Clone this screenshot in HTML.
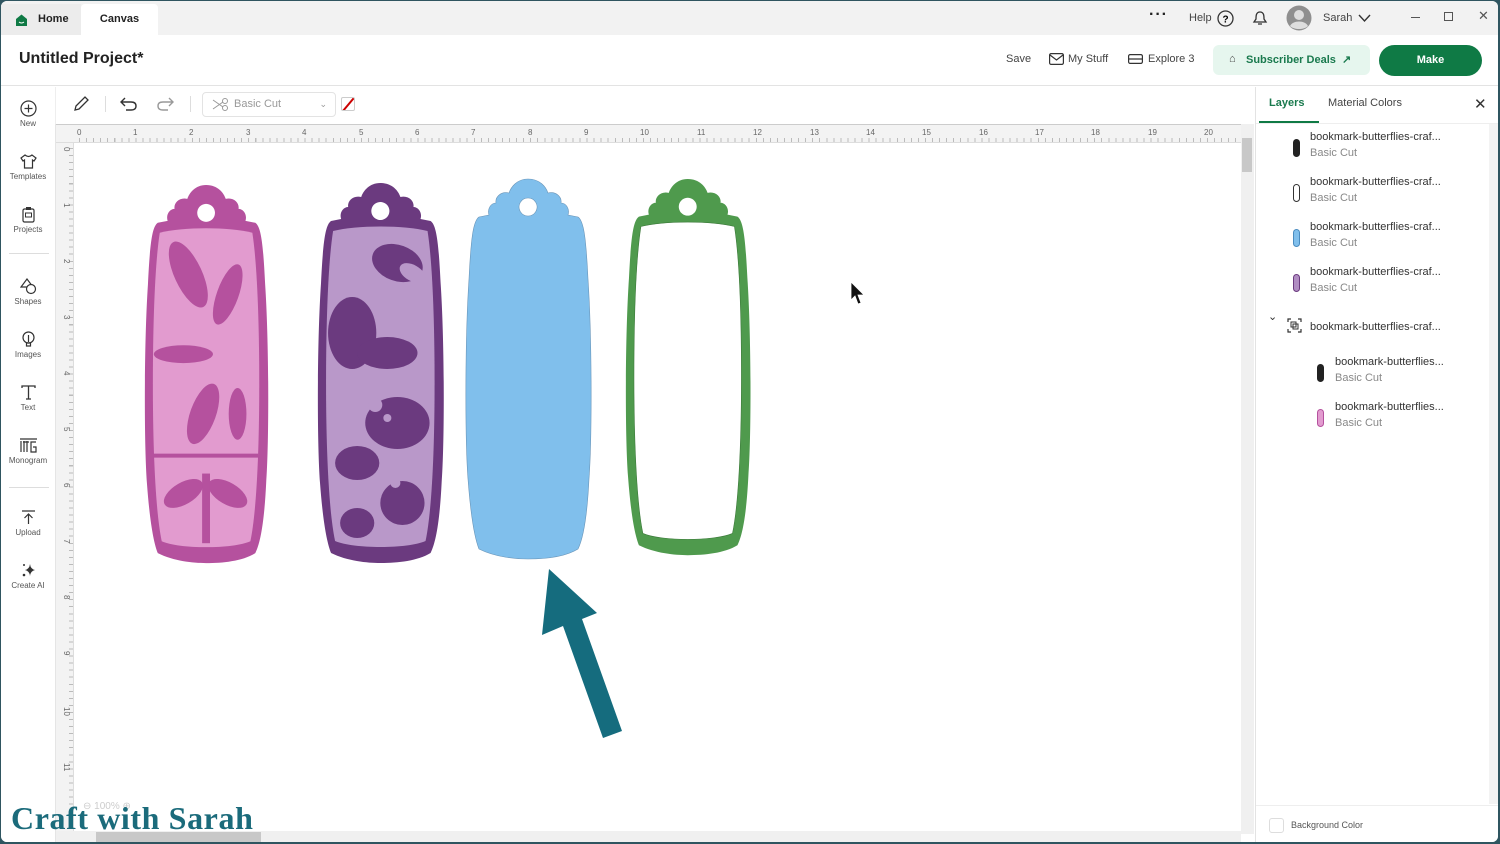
<!DOCTYPE html>
<html><head><meta charset="utf-8"><style>
*{margin:0;padding:0;box-sizing:border-box}
body{width:1500px;height:844px;overflow:hidden;background:#2f5560;font-family:"Liberation Sans",sans-serif;color:#222;position:relative}
.win{position:absolute;left:1px;top:1px;width:1497px;height:841px;background:#fff;border-radius:6px;overflow:hidden}
.abs{position:absolute}
.tabbar{left:0;top:0;width:100%;height:34px;background:#f2f2f2}
.tab{position:absolute;top:3px;height:31px;font-size:11px;font-weight:bold;line-height:31px}
.hdr{left:0;top:34px;width:100%;height:51px;border-bottom:1px solid #e3e3e3;background:#fff}
.side{left:0;top:86px;width:54px;height:758px;background:#fff}
.si{position:absolute;left:0;width:54px;text-align:center;font-size:8px;color:#555}
.si svg{display:block;margin:0 auto 2px}
.ruler{background:#f0f0f0}
.lay{position:absolute;left:0;width:240px;height:45px}
.lay .n{position:absolute;left:54px;top:6px;font-size:11px;color:#333}
.lay .s{position:absolute;left:54px;top:22px;font-size:11px;color:#888}
.lay .ic{position:absolute;left:37px;top:14px;width:7px;height:18px;border-radius:4px}
</style></head><body><div class="win">
<div class="abs tabbar">
 <div class="tab" style="left:0;width:80px;background:#ececec"><svg style="position:absolute;left:14px;top:10px" width="13" height="12"><path d="M1 5 L6.5 0.5 L12 5 V12 H1Z" fill="#0f7a45"/><path d="M4 8 q2.5 2 5 0" stroke="#fff" fill="none"/></svg><span style="position:absolute;left:37px">Home</span></div>
 <div class="tab" style="left:80px;width:77px;background:#fff;border-radius:4px 4px 0 0;text-align:center">Canvas</div>
 <div class="abs" style="left:1148px;top:5px;font-size:16px;font-weight:bold;letter-spacing:1px">···</div>
 <div class="abs" style="left:1188px;top:11px;font-size:11px;color:#444">Help</div>
 <svg class="abs" style="left:1216px;top:9px" width="17" height="17"><circle cx="8.5" cy="8.5" r="7.5" fill="none" stroke="#333" stroke-width="1.3"/><text x="5.5" y="12.5" font-size="10" font-family="Liberation Sans" font-weight="bold">?</text></svg>
 <svg class="abs" style="left:1251px;top:9px" width="16" height="17"><path d="M8 2 C4 2 4 6 4 9 L2 12 H14 L12 9 C12 6 12 2 8 2Z M6 14 H10" fill="none" stroke="#333" stroke-width="1.3"/></svg>
 <svg class="abs" style="left:1285px;top:4px" width="26" height="26"><circle cx="13" cy="13" r="12.5" fill="#8f8f8f"/><circle cx="13" cy="10" r="5" fill="#ddd"/><path d="M4 21 C7 15 19 15 22 21 C18 25 8 25 4 21Z" fill="#ddd"/></svg>
 <div class="abs" style="left:1322px;top:11px;font-size:11px;color:#444">Sarah</div>
 <svg class="abs" style="left:1357px;top:13px" width="13" height="9"><path d="M1 1 L6.5 7 L12 1" fill="none" stroke="#333" stroke-width="1.4"/></svg>
 <div class="abs" style="left:1410px;top:16px;width:9px;height:1px;background:#555"></div>
 <div class="abs" style="left:1443px;top:11px;width:9px;height:9px;border:1px solid #555"></div>
 <div class="abs" style="left:1477px;top:7px;font-size:13px;color:#555">✕</div>
</div>
<div class="abs hdr">
 <div class="abs" style="left:18px;top:15px;font-size:16px;font-weight:bold;color:#222">Untitled Project*</div>
 <div class="abs" style="left:1005px;top:18px;font-size:11px;color:#444">Save</div>
 <svg class="abs" style="left:1048px;top:18px" width="15" height="12"><rect x="0.6" y="0.6" width="13.8" height="10.8" rx="1.5" fill="none" stroke="#333" stroke-width="1.2"/><path d="M1 2 L7.5 7 L14 2" fill="none" stroke="#333" stroke-width="1.2"/></svg>
 <div class="abs" style="left:1067px;top:18px;font-size:11px;color:#444">My Stuff</div>
 <svg class="abs" style="left:1127px;top:19px" width="15" height="10"><rect x="0.6" y="0.6" width="13.8" height="8.8" rx="1.5" fill="none" stroke="#333" stroke-width="1.2"/><path d="M1 5 H14" stroke="#333" stroke-width="1.2"/></svg>
 <div class="abs" style="left:1147px;top:18px;font-size:11px;color:#444">Explore 3</div>
 <div class="abs" style="left:1212px;top:10px;width:157px;height:30px;background:#e6f6ee;border-radius:6px"></div>
 <div class="abs" style="left:1228px;top:18px;font-size:11px;color:#444">⌂</div>
 <div class="abs" style="left:1245px;top:18px;font-size:11px;font-weight:bold;color:#1a7a4e">Subscriber Deals &nbsp;↗</div>
 <div class="abs" style="left:1378px;top:10px;width:103px;height:31px;background:#0f7a45;border-radius:16px;color:#fff;font-size:11px;font-weight:bold;text-align:center;line-height:31px">Make</div>
</div>
<div class="abs side">
 <div class="si" style="top:13px"><svg width="17" height="17"><circle cx="8.5" cy="8.5" r="7.5" fill="none" stroke="#333" stroke-width="1.2"/><path d="M8.5 4.5V12.5M4.5 8.5H12.5" stroke="#333" stroke-width="1.2"/></svg>New</div>
 <div class="si" style="top:66px"><svg width="17" height="17"><path d="M5 2 L1 5 L3 8 L4.5 7 V15 H12.5 V7 L14 8 L16 5 L12 2 Q8.5 5 5 2Z" fill="none" stroke="#333" stroke-width="1.2"/></svg>Templates</div>
 <div class="si" style="top:119px"><svg width="17" height="17"><rect x="3" y="3" width="11" height="13" rx="1.5" fill="none" stroke="#333" stroke-width="1.2"/><rect x="6" y="1" width="5" height="3" fill="#333"/><rect x="5.5" y="7" width="6" height="4" fill="none" stroke="#333"/></svg>Projects</div>
 <div class="abs" style="left:8px;top:166px;width:40px;height:1px;background:#ddd"></div>
 <div class="si" style="top:191px"><svg width="17" height="17"><path d="M7 1 L1 9 H13Z" fill="none" stroke="#333" stroke-width="1.2"/><circle cx="11" cy="11" r="4.5" fill="#fff" stroke="#333" stroke-width="1.2"/></svg>Shapes</div>
 <div class="si" style="top:244px"><svg width="17" height="17"><circle cx="8.5" cy="6.5" r="5.5" fill="none" stroke="#333" stroke-width="1.2"/><path d="M6.5 12 H10.5 V15 H6.5Z M8.5 4 V11" fill="none" stroke="#333" stroke-width="1.2"/></svg>Images</div>
 <div class="si" style="top:297px"><svg width="17" height="17"><path d="M2 4 V2 H15 V4 M8.5 2 V15 M6 15 H11" fill="none" stroke="#333" stroke-width="1.3"/></svg>Text</div>
 <div class="si" style="top:350px"><svg width="19" height="17"><path d="M1 2 H18 M2 4 V15 M5 4 V15 M8 4 V15 M10 5 H4 M17 5 H12 V15 H17 V10 H14" fill="none" stroke="#333" stroke-width="1.2"/></svg>Monogram</div>
 <div class="abs" style="left:8px;top:400px;width:40px;height:1px;background:#ddd"></div>
 <div class="si" style="top:422px"><svg width="17" height="17"><path d="M2 2 H15 M8.5 15 V5 M4.5 9 L8.5 5 L12.5 9" fill="none" stroke="#333" stroke-width="1.2"/></svg>Upload</div>
 <div class="si" style="top:475px"><svg width="17" height="17"><path d="M10 2 Q10.5 7 15 8 Q10.5 9 10 14 Q9.5 9 5 8 Q9.5 7 10 2Z" fill="#333"/><circle cx="4" cy="13" r="1.3" fill="#333"/><circle cx="4" cy="3" r="1" fill="#333"/></svg>Create AI</div>
</div>
<div class="abs" style="left:54px;top:86px;width:1200px;height:37px;background:#fff;border-left:1px solid #eee">
 <svg class="abs" style="left:16px;top:8px" width="18" height="18"><path d="M3 15 L4 11 L13 2 L16 5 L7 14Z" fill="none" stroke="#333" stroke-width="1.3"/></svg>
 <div class="abs" style="left:49px;top:9px;width:1px;height:16px;background:#ddd"></div>
 <svg class="abs" style="left:64px;top:9px" width="18" height="15"><path d="M5 2 L1 6 L5 10 M1 6 H11 Q16 6 16 10 Q16 14 11 14 H6" fill="none" stroke="#333" stroke-width="1.4"/></svg>
 <svg class="abs" style="left:100px;top:9px" width="18" height="15"><path d="M13 2 L17 6 L13 10 M17 6 H7 Q2 6 2 10 Q2 14 7 14 H12" fill="none" stroke="#999" stroke-width="1.4"/></svg>
 <div class="abs" style="left:134px;top:9px;width:1px;height:16px;background:#ddd"></div>
 <div class="abs" style="left:146px;top:5px;width:134px;height:25px;border:1px solid #e3e3e3;border-radius:4px;font-size:11px;color:#999;line-height:23px;padding-left:31px">Basic Cut<span style="position:absolute;right:8px;top:0;font-size:9px">⌄</span>
 <svg class="abs" style="left:9px;top:5px" width="18" height="13"><circle cx="13" cy="3" r="2.5" fill="none" stroke="#999"/><circle cx="13" cy="10" r="2.5" fill="none" stroke="#999"/><path d="M1 2 L11 9 M1 11 L11 4" stroke="#999"/></svg></div>
 <div class="abs" style="left:285px;top:10px;width:14px;height:14px;border:1px solid #ccc;border-radius:2px;overflow:hidden"><div style="position:absolute;left:5px;top:-3px;width:2px;height:20px;background:#c00;transform:rotate(40deg)"></div></div>
</div>
<div class="abs" style="left:54px;top:123px;width:1186px;height:720px;background:#fff;border-left:1px solid #e5e5e5"></div>
<div class="abs ruler" style="left:55px;top:123px;width:1185px;height:19px;border-top:1px solid #ccc;border-bottom:1px solid #ddd;
 background:#f3f3f3 repeating-linear-gradient(90deg,#bbb 0 1px,transparent 1px 7.05px) 23px 13px/100% 5px no-repeat"></div>
<div class="abs ruler" style="left:55px;top:142px;width:18px;height:700px;border-right:1px solid #ddd;
 background:#f3f3f3 repeating-linear-gradient(180deg,#bbb 0 1px,transparent 1px 7.05px) 13px 5px/5px 100% no-repeat"></div>
<div class="abs" style="left:1240px;top:123px;width:13px;height:710px;background:#f0f0f0"><div style="position:absolute;left:1px;top:14px;width:10px;height:34px;background:#c8c8c8"></div></div>
<div class="abs" style="left:55px;top:830px;width:1185px;height:12px;background:#f0f0f0"><div style="position:absolute;left:40px;top:1px;width:165px;height:10px;background:#c8c8c8"></div></div>
<svg class="abs" style="left:0;top:0" width="1255" height="844">
 <defs>
  <path id="bm" fill-rule="evenodd" d="M63 0 C52 0 46 8 44 14 C36 12 30 18 31 24 C26 24 22 30 24 36 L14 38 C8 42 6 60 4 100 C0 160 0 260 3 300 C6 340 10 360 14 370 C30 378 50 380 63 380 C80 380 100 378 113 370 C118 360 122 340 124 300 C127 260 127 160 123 100 C121 60 119 42 113 38 L103 36 C105 30 101 24 96 24 C97 18 91 12 83 14 C81 8 75 0 63 0Z M63 19 a9 9 0 1 0 0.1 0Z"/>
  <path id="in" d="M16 48 C40 42 86 42 110 48 C115 80 117 140 117 200 C117 270 114 330 108 358 C90 366 36 366 18 358 C12 330 9 270 9 200 C9 140 11 80 16 48Z"/>
 </defs>
 <g font-family="Liberation Sans" font-size="8" fill="#666">
  <text x="76" y="134">0</text><text x="132" y="134">1</text><text x="188" y="134">2</text><text x="245" y="134">3</text><text x="301" y="134">4</text><text x="358" y="134">5</text><text x="414" y="134">6</text><text x="470" y="134">7</text><text x="527" y="134">8</text><text x="583" y="134">9</text><text x="639" y="134">10</text><text x="696" y="134">11</text><text x="752" y="134">12</text><text x="809" y="134">13</text><text x="865" y="134">14</text><text x="921" y="134">15</text><text x="978" y="134">16</text><text x="1034" y="134">17</text><text x="1090" y="134">18</text><text x="1147" y="134">19</text><text x="1203" y="134">20</text>
 </g>
 <g font-family="Liberation Sans" font-size="8" fill="#666">
  <text transform="translate(63,146) rotate(90)">0</text><text transform="translate(63,202) rotate(90)">1</text><text transform="translate(63,258) rotate(90)">2</text><text transform="translate(63,314) rotate(90)">3</text><text transform="translate(63,370) rotate(90)">4</text><text transform="translate(63,426) rotate(90)">5</text><text transform="translate(63,482) rotate(90)">6</text><text transform="translate(63,538) rotate(90)">7</text><text transform="translate(63,594) rotate(90)">8</text><text transform="translate(63,650) rotate(90)">9</text><text transform="translate(63,706) rotate(90)">10</text><text transform="translate(63,762) rotate(90)">11</text>
 </g>
 <g transform="translate(143,184) scale(0.985,0.995)">
  <use href="#bm" fill="#b5519e"/>
  <use href="#in" fill="#e29bcf"/>
  <g fill="#b5519e">
   <ellipse cx="45" cy="90" rx="14" ry="36" transform="rotate(-25 45 90)"/>
   <ellipse cx="85" cy="110" rx="11" ry="32" transform="rotate(20 85 110)"/>
   <ellipse cx="40" cy="170" rx="30" ry="9"/>
   <ellipse cx="60" cy="230" rx="13" ry="32" transform="rotate(20 60 230)"/>
   <ellipse cx="95" cy="230" rx="9" ry="26"/>
   <ellipse cx="40" cy="310" rx="22" ry="11" transform="rotate(-30 40 310)"/>
   <ellipse cx="85" cy="310" rx="22" ry="11" transform="rotate(30 85 310)"/>
   <rect x="59" y="290" width="8" height="70"/>
   <rect x="10" y="270" width="106" height="4"/>
  </g>
 </g>
 <g transform="translate(316,182) scale(1.005,1)">
  <use href="#bm" fill="#6b3a7f"/>
  <use href="#in" fill="#b998c9"/>
  <g fill="#6b3a7f">
   <ellipse cx="80" cy="80" rx="26" ry="18" transform="rotate(20 80 80)"/>
   <ellipse cx="35" cy="150" rx="24" ry="36"/>
   <ellipse cx="70" cy="170" rx="30" ry="16"/>
   <ellipse cx="80" cy="240" rx="32" ry="26"/>
   <ellipse cx="40" cy="280" rx="22" ry="17"/>
   <ellipse cx="85" cy="320" rx="22" ry="22"/>
   <ellipse cx="40" cy="340" rx="17" ry="15"/>
  </g>
  <g fill="#b998c9"><circle cx="58" cy="222" r="7"/><circle cx="70" cy="235" r="4"/><circle cx="78" cy="300" r="5"/><ellipse cx="95" cy="90" rx="14" ry="8" transform="rotate(30 95 90)"/></g>
 </g>
 <g transform="translate(464,178)"><use href="#bm" fill="#80bfec" stroke="#6a95b8" stroke-width="0.6"/></g>
 <g transform="translate(624,178) scale(0.995,0.99)"><use href="#bm" fill="#4f9a4d"/><use href="#in" fill="#fff" stroke="#3d7a3b" stroke-width="0.6"/></g>
 <polygon points="548,568 596,612 581,618 621,730 602,737 562,625 541,634" fill="#156c7e"/>
 <path d="M850 281 L850 299 L854 295 L857 303 L860 302 L857 294 L863 294Z" fill="#111" stroke="#fff" stroke-width="0.8"/>
</svg>
<div class="abs" style="left:82px;top:800px;font-size:10px;color:#ccc">⊖ 100% ⊕</div>
<div class="abs" style="left:10px;top:799px;font-family:'Liberation Serif',serif;font-size:32px;font-weight:bold;color:#1b6b7b;letter-spacing:0.6px">Craft with Sarah</div>
<div class="abs" style="left:1254px;top:86px;width:246px;height:758px;border-left:1px solid #e3e3e3;background:#fff">
 <div class="abs" style="left:13px;top:10px;font-size:11px;font-weight:bold;color:#1a7a4e">Layers</div>
 <div class="abs" style="left:3px;top:34px;width:60px;height:2px;background:#0f7a45"></div>
 <div class="abs" style="left:72px;top:10px;font-size:11px;color:#444">Material Colors</div>
 <div class="abs" style="left:218px;top:8px;font-size:15px;color:#333">✕</div>
 <div class="abs" style="left:0;top:36px;width:246px;height:1px;background:#eee"></div>
 <div class="abs" style="left:233px;top:37px;width:12px;height:680px;background:#f3f3f3"></div>
 <div class="lay" style="top:38px"><div class="ic" style="background:#222"></div><div class="n">bookmark-butterflies-craf...</div><div class="s">Basic Cut</div></div>
 <div class="lay" style="top:83px"><div class="ic" style="border:1.3px solid #333;background:#fff"></div><div class="n">bookmark-butterflies-craf...</div><div class="s">Basic Cut</div></div>
 <div class="lay" style="top:128px"><div class="ic" style="background:#80bfec;border:1px solid #4a8cc0"></div><div class="n">bookmark-butterflies-craf...</div><div class="s">Basic Cut</div></div>
 <div class="lay" style="top:173px"><div class="ic" style="background:#b08dc2;border:1px solid #6b3a7f"></div><div class="n">bookmark-butterflies-craf...</div><div class="s">Basic Cut</div></div>
 <div class="lay" style="top:226px"><div class="abs" style="left:12px;top:-3px;font-size:11px;color:#333">⌄</div><svg class="abs" style="left:31px;top:5px" width="15" height="15"><path d="M1 4V1H4M11 1H14V4M14 11V14H11M4 14H1V11" fill="none" stroke="#333" stroke-width="1.2"/><rect x="4" y="4" width="5" height="5" fill="none" stroke="#333"/><rect x="6" y="6" width="5" height="5" fill="none" stroke="#333"/></svg><div class="n" style="top:8px">bookmark-butterflies-craf...</div></div>
 <div class="lay" style="top:263px"><div class="ic" style="left:61px;background:#222"></div><div class="n" style="left:79px">bookmark-butterflies...</div><div class="s" style="left:79px">Basic Cut</div></div>
 <div class="lay" style="top:308px"><div class="ic" style="left:61px;background:#e29bcf;border:1px solid #b5519e"></div><div class="n" style="left:79px">bookmark-butterflies...</div><div class="s" style="left:79px">Basic Cut</div></div>
 <div class="abs" style="left:0;top:718px;width:246px;height:1px;background:#eee"></div>
 <div class="abs" style="left:13px;top:731px;width:15px;height:15px;border:1px solid #ddd;border-radius:3px"></div>
 <div class="abs" style="left:35px;top:733px;font-size:9px;color:#555">Background Color</div>
</div>
</div></body></html>
